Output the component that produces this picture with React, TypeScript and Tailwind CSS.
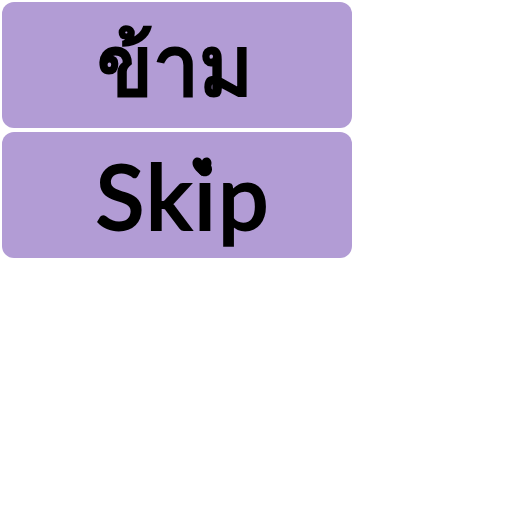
import React from "react";

export default function App() {
  return (
    <div className="flex flex-col gap-1 p-0.5 w-[354px] font-['Lato','Noto_Sans','DejaVu_Sans',sans-serif] text-black">
      <button className="h-[126px] w-[350px] rounded-xl bg-[#b29cd5] flex items-center justify-center text-[82px] leading-none font-medium pb-1 pr-1 [-webkit-text-stroke:3px_black]">
        ข้าม
      </button>
      <button className="relative h-[126px] w-[350px] rounded-xl bg-[#b29cd5] flex items-center justify-center text-[90px] leading-none font-medium pl-3 tracking-[2px] [-webkit-text-stroke:2px_black]">
        Skip
        <svg className="absolute left-[190px] top-[25px] w-5 h-[19px]" viewBox="0 0 20 19">
          <path d="M10 19C6 15.5 0.5 11.5 0.5 6C0.5 2.5 3 0.5 5.5 0.5C7.5 0.5 9 1.5 10 3.5C11 1.5 12.5 0.5 14.5 0.5C17 0.5 19.5 2.5 19.5 6C19.5 11.5 14 15.5 10 19Z" fill="#000" />
        </svg>
      </button>
    </div>
  );
}
